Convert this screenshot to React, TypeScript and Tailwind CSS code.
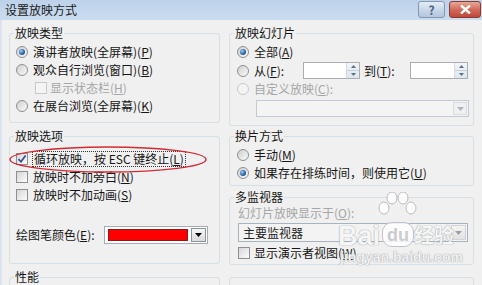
import React from "react";

function Radio({ checked = false, disabled = false }: { checked?: boolean; disabled?: boolean }) {
  return (
    <span
      className={
        "inline-flex w-[12px] h-[12px] shrink-0 rounded-full border items-center justify-center " +
        (disabled
          ? "border-[#c9c9c9] bg-[#f4f4f4]"
          : "border-[#8e8f8f] bg-gradient-to-br from-[#cfcfcf] to-[#fbfbfb]")
      }
    >
      {checked && (
        <span className="w-[6px] h-[6px] rounded-full bg-[radial-gradient(circle_at_35%_35%,#9fd0f5,#2a64a8_55%,#17406f)]" />
      )}
    </span>
  );
}

function Check({ checked = false, disabled = false }: { checked?: boolean; disabled?: boolean }) {
  return (
    <span
      className={
        "inline-flex w-[12px] h-[12px] shrink-0 border items-center justify-center " +
        (disabled
          ? "border-[#c9c9c9] bg-[#f4f4f4]"
          : "border-[#8e8f8f] bg-gradient-to-br from-[#d6d6d6] to-[#fcfcfc]")
      }
    >
      {checked && (
        <svg width="10" height="10" viewBox="0 0 10 10">
          <path d="M1.5 5.2 L4 7.8 L8.6 1.6" stroke="#2b4f95" strokeWidth="1.7" fill="none" />
        </svg>
      )}
    </span>
  );
}

function U({ c }: { c: string }) {
  return <span className="underline underline-offset-[1px]">{c}</span>;
}

function DownArrow({ color = "#000" }: { color?: string }) {
  return (
    <svg width="7" height="4" viewBox="0 0 7 4">
      <path d="M0 0 L7 0 L3.5 4 Z" fill={color} />
    </svg>
  );
}

function Spin() {
  return (
    <div className="ml-auto w-[13px] h-full flex flex-col border-l border-[#d6dbe2] bg-gradient-to-b from-[#f2f5f9] to-[#dfe6ee]">
      <div className="flex-1 flex items-center justify-center border-b border-[#c5cdd7]">
        <svg width="5" height="3" viewBox="0 0 5 3">
          <path d="M0 3 L5 3 L2.5 0 Z" fill="#5a6f8c" />
        </svg>
      </div>
      <div className="flex-1 flex items-center justify-center">
        <svg width="5" height="3" viewBox="0 0 5 3">
          <path d="M0 0 L5 0 L2.5 3 Z" fill="#5a6f8c" />
        </svg>
      </div>
    </div>
  );
}

function Group({
  title,
  className,
  children,
}: {
  title: string;
  className: string;
  children?: React.ReactNode;
}) {
  return (
    <fieldset className={"border border-[#d5dfe5] rounded-[3px] p-0 m-0 min-w-0 " + className}>
      <legend className="ml-[4px] px-[1px] leading-[14px]">{title}</legend>
      {children}
    </fieldset>
  );
}

export default function App() {
  return (
    <div className="relative w-[482px] h-[285px] overflow-hidden bg-[#f0f0f0] text-[12px] leading-[14px] text-[#151515] font-['Noto_Sans_CJK_SC','Liberation_Sans',sans-serif]">
      {/* title bar */}
      <div className="h-[20px] flex bg-gradient-to-b from-[#bdd2ea] to-[#cadcef]">
        <div className="pl-[5px] pt-[3px] text-[#1a1a1a]">设置放映方式</div>
        <div className="ml-auto flex gap-[4px] pt-[1px] pr-[1px]">
          <div className="w-[27px] h-[17px] rounded-[3px] border border-[#8496b0] bg-gradient-to-b from-[#e4edf7] via-[#c9d8ea] to-[#b3c6dc] flex items-center justify-center text-[#4d6080] text-[12px] leading-none font-bold">
            ?
          </div>
          <div className="w-[32px] h-[17px] rounded-[3px] border border-[#8a3a30] bg-gradient-to-b from-[#e9a898] via-[#d26a5b] to-[#c1473a] flex items-center justify-center">
            <svg width="11" height="9" viewBox="0 0 11 9">
              <path d="M1 0.5 L10 8.5 M10 0.5 L1 8.5" stroke="#fff" strokeWidth="2.4" />
            </svg>
          </div>
        </div>
      </div>

      {/* body */}
      <div className="flex gap-[9px] pl-[7px] pr-[8px] pt-[6px] border-l-[2px] border-[#dbe4ee]">
        {/* left column */}
        <div className="w-[211px] flex flex-col gap-[6px]">
          <Group title="放映类型" className="h-[97px]">
            <div className="pl-[6px] pt-[3px]">
              <div className="flex items-center h-[18px] gap-[5px]">
                <Radio checked />
                <span>
                  演讲者放映(全屏幕)(<U c="P" />)
                </span>
              </div>
              <div className="flex items-center h-[18px] gap-[5px]">
                <Radio />
                <span>
                  观众自行浏览(窗口)(<U c="B" />)
                </span>
              </div>
              <div className="flex items-center h-[18px] gap-[3px] pl-[19px] text-[#a6a6a6]">
                <Check disabled />
                <span>
                  显示状态栏(<U c="H" />)
                </span>
              </div>
              <div className="flex items-center h-[18px] gap-[5px]">
                <Radio />
                <span>
                  在展台浏览(全屏幕)(<U c="K" />)
                </span>
              </div>
            </div>
          </Group>

          <Group title="放映选项" className="h-[135px]">
            <div className="pl-[6px] pt-[7px]">
              <div className="flex items-center h-[18px] gap-[4px]">
                <Check checked />
                <span className="border border-dotted border-[#333] px-[1px] leading-[14px]">
                  循环放映，按 ESC 键终止(<U c="L" />)
                </span>
              </div>
              <div className="flex items-center h-[18px] gap-[5px]">
                <Check />
                <span>
                  放映时不加旁白(<U c="N" />)
                </span>
              </div>
              <div className="flex items-center h-[18px] gap-[5px]">
                <Check />
                <span>
                  放映时不加动画(<U c="S" />)
                </span>
              </div>
              <div className="flex items-center h-[18px] mt-[22px]">
                <span className="w-[88px]">
                  绘图笔颜色(<U c="E" />):
                </span>
                <div className="w-[104px] h-[18px] border border-[#a6acb4] bg-white flex items-center pl-[3px] pr-[1px] gap-[3px]">
                  <div className="w-[82px] h-[12px] bg-[#ff0000] border border-[#8c1b1b]" />
                  <div className="ml-auto w-[15px] h-[14px] border border-[#8e959e] bg-gradient-to-b from-[#f7f7f7] to-[#d9d9d9] flex items-center justify-center">
                    <DownArrow />
                  </div>
                </div>
              </div>
            </div>
          </Group>

          <Group title="性能" className="h-[40px]" />
        </div>

        {/* right column */}
        <div className="w-[245px] flex flex-col">
          <Group title="放映幻灯片" className="h-[100px]">
            <div className="pl-[7px] pt-[3px]">
              <div className="flex items-center h-[18px] gap-[5px]">
                <Radio checked />
                <span>
                  全部(<U c="A" />)
                </span>
              </div>
              <div className="flex items-center h-[19px]">
                <Radio />
                <span className="w-[49px] ml-[5px]">
                  从(<U c="F" />):
                </span>
                <div className="w-[57px] h-[17px] border border-[#abadb3] bg-white flex">
                  <Spin />
                </div>
                <span className="w-[46px] ml-[4px]">
                  到(<U c="T" />):
                </span>
                <div className="w-[58px] h-[17px] border border-[#abadb3] bg-white flex">
                  <Spin />
                </div>
              </div>
              <div className="flex items-center h-[18px] gap-[5px] text-[#a6a6a6]">
                <Radio disabled />
                <span>
                  自定义放映(<U c="C" />):
                </span>
              </div>
              <div className="ml-[19px] mt-[2px] w-[213px] h-[17px] border border-[#c4cad1] bg-[#f4f4f4] flex justify-end p-[1px]">
                <div className="w-[14px] h-full bg-[#eef0f2] border border-[#d8dce0] flex items-center justify-center">
                  <DownArrow color="#b0b4b8" />
                </div>
              </div>
            </div>
          </Group>

          <Group title="换片方式" className="h-[57px] mt-[3px]">
            <div className="pl-[7px] pt-[3px]">
              <div className="flex items-center h-[18px] gap-[5px]">
                <Radio />
                <span>
                  手动(<U c="M" />)
                </span>
              </div>
              <div className="flex items-center h-[18px] gap-[5px]">
                <Radio checked />
                <span>
                  如果存在排练时间，则使用它(<U c="U" />)
                </span>
              </div>
            </div>
          </Group>

          <Group title="多监视器" className="h-[75px] mt-[4px]">
            <div className="pl-[8px] pt-[1px]">
              <div className="flex items-center h-[16px] text-[#a6a6a6]">
                <span>
                  幻灯片放映显示于(<U c="O" />):
                </span>
              </div>
              <div className="mt-[2px] w-[230px] h-[19px] border border-[#aab3bd] bg-[#f3f3f3] flex items-center pl-[4px] p-[1px]">
                <span className="text-[#222]">主要监视器</span>
                <div className="ml-auto w-[15px] h-full bg-gradient-to-b from-[#f4f4f4] to-[#e2e2e2] border border-[#d0d4d8] flex items-center justify-center">
                  <DownArrow color="#9aa0a6" />
                </div>
              </div>
              <div className="flex items-center h-[18px] gap-[4px] mt-[2px]">
                <Check />
                <span>
                  显示演示者视图(<U c="W" />)
                </span>
              </div>
            </div>
          </Group>

          <div className="mt-[12px] h-[30px] border border-[#d5dfe5] rounded-[3px]" />
        </div>
      </div>

      {/* red ellipse annotation */}
      <svg className="absolute left-0 top-0 pointer-events-none" width="482" height="285">
        <ellipse cx="108" cy="159.5" rx="98" ry="12.5" fill="none" stroke="#d42a34" strokeWidth="1.4" />
      </svg>

      {/* watermark */}
      <div className="absolute left-[322px] top-[190px] w-[140px] h-[80px] pointer-events-none">
        <svg className="absolute left-[52px] top-[2px]" width="44" height="34" viewBox="0 0 44 34">
          <g fill="#ffffff" fillOpacity="0.85" stroke="#b9bcc0" strokeWidth="1">
            <ellipse cx="10" cy="16" rx="5" ry="6" />
            <ellipse cx="18" cy="6" rx="5" ry="6" />
            <ellipse cx="29" cy="6" rx="5" ry="6" />
            <ellipse cx="37" cy="16" rx="5" ry="6" />
          </g>
        </svg>
        <div className="absolute left-[16px] top-[33px] text-[27px] leading-[27px] font-bold font-['Liberation_Sans',sans-serif] text-white/90 [text-shadow:0_0_1px_#9aa0a6,0_0_1px_#9aa0a6]">
          Bai
        </div>
        <div className="absolute left-[60px] top-[32px] w-[32px] h-[25px] rounded-[10px] bg-white/80 border border-[#c0c4c8] flex items-center justify-center text-[18px] leading-none font-bold font-['Liberation_Sans',sans-serif] text-[#c8ccd0]">
          du
        </div>
        <div className="absolute left-[92px] top-[34px] text-[20px] leading-[22px] font-bold text-white/90 [text-shadow:0_0_1px_#9aa0a6,0_0_1px_#9aa0a6]">
          经验
        </div>
        <div className="absolute left-[18px] top-[60px] text-[14px] leading-[15px] font-bold font-['Liberation_Sans',sans-serif] text-white/85 [text-shadow:0_0_1px_#9aa0a6,0_0_1px_#9aa0a6]">
          jingyan.baidu.com
        </div>
      </div>
    </div>
  );
}
